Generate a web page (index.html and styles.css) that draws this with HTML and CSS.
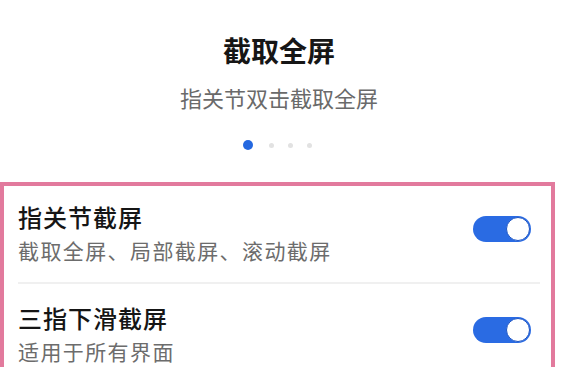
FILE: index.html
```html
<!DOCTYPE html>
<html lang="zh-CN">
<head>
<meta charset="utf-8">
<title>截取全屏</title>
<link rel="stylesheet" href="styles.css">
</head>
<body>
  <section class="header">
    <h1 class="title">截取全屏</h1>
    <p class="subtitle">指关节双击截取全屏</p>
    <div class="dots">
      <span class="dot active"></span>
      <span class="dot"></span>
      <span class="dot"></span>
      <span class="dot"></span>
    </div>
  </section>
  <section class="list">
    <div class="item first">
      <div class="text">
        <div class="item-title">指关节截屏</div>
        <div class="item-sub">截取全屏、局部截屏、滚动截屏</div>
      </div>
      <span class="toggle on"><span class="knob"></span></span>
    </div>
    <div class="divider"></div>
    <div class="item">
      <div class="text">
        <div class="item-title">三指下滑截屏</div>
        <div class="item-sub">适用于所有界面</div>
      </div>
      <span class="toggle on"><span class="knob"></span></span>
    </div>
  </section>
</body>
</html>
```

FILE: styles.css
```css
* { box-sizing: border-box; }
html, body {
  margin: 0;
  padding: 0;
  background: #ffffff;
  overflow: hidden;
}
body {
  width: 566px;
  height: 367px;
  font-family: "Noto Sans CJK SC", "Noto Sans", sans-serif;
}
.header {
  width: 558px;
  height: 182px;
  padding-top: 33px;
  display: flex;
  flex-direction: column;
  align-items: center;
}
.title {
  margin: 0;
  font-size: 28px;
  line-height: 34px;
  font-weight: 700;
  color: #161616;
}
.subtitle {
  margin: 16px 0 0;
  font-size: 22px;
  line-height: 28px;
  color: #6a6a6a;
}
.dots {
  margin-top: 29px;
  height: 10px;
  display: flex;
  align-items: center;
  gap: 14px;
  padding-right: 4px;
}
.dot {
  width: 5px;
  height: 5px;
  border-radius: 50%;
  background: #e2e2e2;
}
.dot.active {
  width: 10px;
  height: 10px;
  background: #2468e0;
  margin-right: 2px;
}
.list {
  width: 555px;
  height: 185px;
  border: 4px solid #e27a9d;
  border-bottom: none;
  background: #fff;
  overflow: hidden;
}
.item {
  display: flex;
  align-items: center;
  justify-content: space-between;
  padding: 20px 20px 20px 14px;
}
.item.first { padding-top: 17px; }
.text {
  display: flex;
  flex-direction: column;
  gap: 7px;
}
.item-title {
  font-size: 24px;
  line-height: 28px;
  font-weight: 500;
  letter-spacing: 1px;
  color: #151515;
}
.item-sub {
  font-size: 21px;
  line-height: 24px;
  letter-spacing: 1.4px;
  color: #6c6c6c;
}
.divider {
  height: 2px;
  margin: 0 11px 0 14px;
  background: #f0f0f0;
}
.toggle {
  position: relative;
  width: 58px;
  height: 26px;
  border-radius: 13px;
  background: #2a6be3;
  margin-bottom: 8px;
  flex-shrink: 0;
}
.knob {
  position: absolute;
  right: 1px;
  top: 1px;
  width: 24px;
  height: 24px;
  border-radius: 50%;
  background: #fff;
  border: 1px solid #1d55c4;
}
```
